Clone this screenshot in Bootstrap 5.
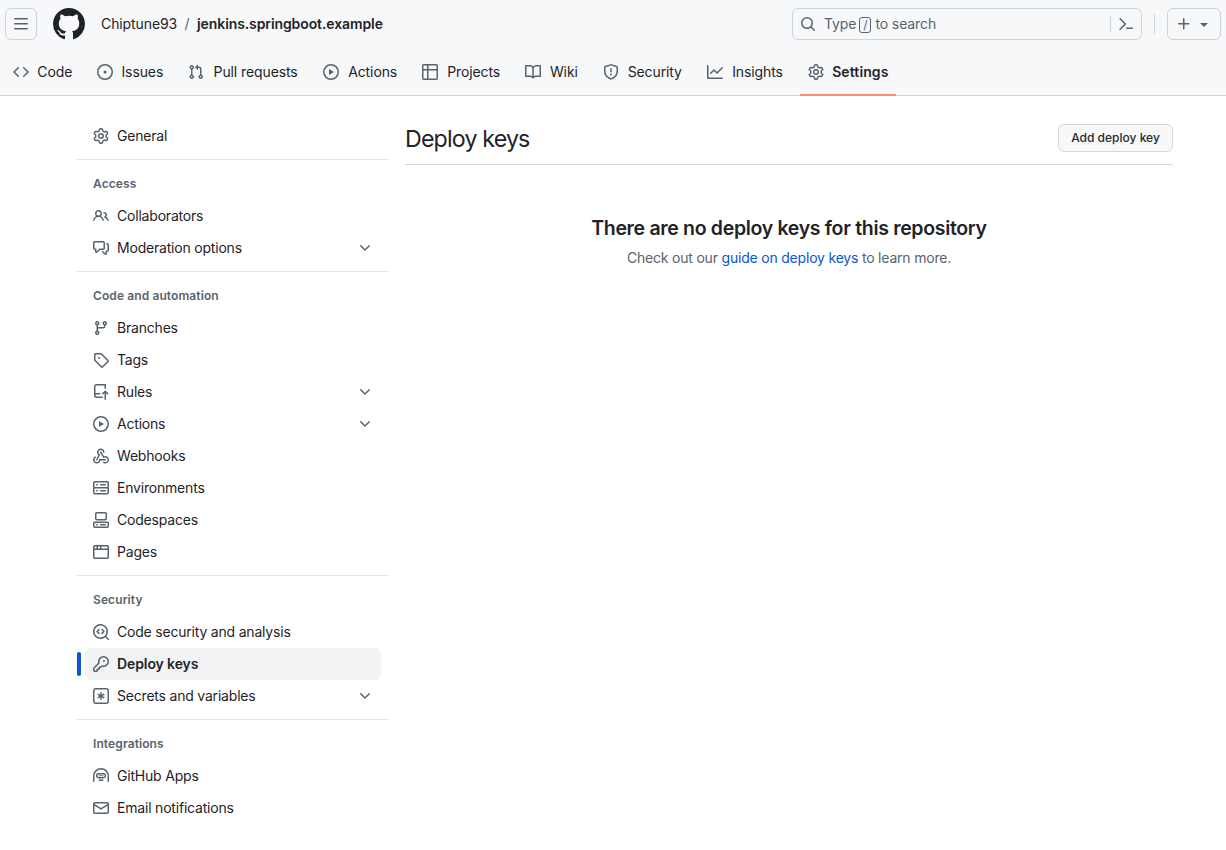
<!DOCTYPE html>
<html lang="en">
<head>
<meta charset="utf-8">
<meta name="viewport" content="width=device-width, initial-scale=1">
<title>Deploy keys</title>
<link rel="stylesheet" href="https://cdn.jsdelivr.net/npm/bootstrap@5.3.0/dist/css/bootstrap.min.css">
<style>
  body { font-family: Inter, "Liberation Sans", sans-serif; font-size: 14px; line-height: 20px; color: #1f2328; letter-spacing: -.1px; }
  a { color: inherit; text-decoration: none; }
  .ico { width: 16px; height: 16px; fill: #59636e; flex: none; display: block; }
  .fw-semi { font-weight: 600; }

  .app-header { background: #f6f8fa; border-bottom: 1px solid #d0d7de; height: 96px; }
  .top-bar { height: 48px; padding: 0 5px; }
  .box-btn { height: 32px; border: 1px solid #ccd3dc; border-radius: 6px; background: transparent; }
  .menu-btn { width: 32px; }
  .add-btn { width: 54px; padding: 0 8px; gap: 4px; }
  .logo { width: 32px; height: 32px; fill: #1f2328; margin: 0 12px 0 16px; }
  .crumb-sep { color: #59636e; margin: 0 7.5px; }
  .search-box { width: 350px; color: #59636e; padding: 0 7px; }
  .slash-key { border: 1px solid #59636e; border-radius: 3px; width: 12px; height: 16px; line-height: 14px; font-size: 12px; margin: 1px 4px 0 3px; }
  .rule-v { width: 1px; height: 16px; background: #ccd3dc; }
  .search-box .rule-v { margin-right: 7px; }
  .bar-rule { height: 20px; margin: 0 12px; }

  .tabs { height: 47px; padding: 0 5px; gap: 8px; }
  .tab { padding: 2px 8px 0; gap: 8px; height: 48px; border-bottom: 2px solid transparent; }
  .tab.current { border-color: #fd8c73; font-weight: 600; letter-spacing: .1px; }
  .tab span { text-align: center; }
  .tab span::before { content: attr(data-label); display: block; height: 0; font-weight: 600; letter-spacing: -.06px; visibility: hidden; overflow: hidden; }
  .tab.current span::before { letter-spacing: .1px; }

  .page { padding: 24px 53px 0 77px; gap: 16px; }
  .side { width: 312px; flex: none; letter-spacing: -.2px; }
  .side-section { border-top: 1px solid #e1e4e8; margin-top: 7px; padding-top: 8px; }
  .side-title { font-size: 12px; font-weight: 600; color: #59636e; height: 32px; padding-left: 16px; letter-spacing: .1px; }
  .side-item { height: 32px; margin: 0 8px; padding: 0 8px; gap: 8px; border-radius: 6px; }
  .side-item.current { background: #f2f3f5; font-weight: 600; letter-spacing: -.1px; }
  .side-item.current::before { content: ""; position: absolute; left: -8px; top: 4px; width: 4px; height: 24px; border-radius: 6px; background: #0b57d0; }

  .page-head { height: 45px; padding-bottom: 8px; border-bottom: 1px solid #d0d7de; }
  .page-head h1 { font-size: 23.25px; font-weight: 400; line-height: 36px; letter-spacing: -.86px; padding-top: 2px; }
  .key-btn { height: 28px; width: 115px; border: 1px solid #d5d8dc; border-radius: 6px; background: #f6f8fa; font-size: 12px; font-weight: 500; color: #25292e; padding: 0; line-height: 20px; }
  .blank { padding-top: 48px; }
  .blank h2 { font-size: 19.5px; font-weight: 600; line-height: 30px; letter-spacing: -.32px; }
  .blank p { color: #59636e; padding-top: 5px; letter-spacing: -.2px; }
  .blank a { color: #0b57d0; }
</style>
</head>
<body>
<svg width="0" height="0" class="d-none" xmlns="http://www.w3.org/2000/svg">
  <symbol id="bars" viewBox="0 0 16 16"><path d="M1 2.75A.75.75 0 0 1 1.75 2h12.5a.75.75 0 0 1 0 1.5H1.75A.75.75 0 0 1 1 2.75Zm0 5A.75.75 0 0 1 1.75 7h12.5a.75.75 0 0 1 0 1.5H1.75A.75.75 0 0 1 1 7.75ZM1.75 12h12.5a.75.75 0 0 1 0 1.5H1.75a.75.75 0 0 1 0-1.5Z"/></symbol>
  <symbol id="github" viewBox="0 0 16 16"><path d="M8 0c4.42 0 8 3.58 8 8a8.013 8.013 0 0 1-5.45 7.59c-.4.08-.55-.17-.55-.38 0-.27.01-1.13.01-2.2 0-.75-.25-1.23-.54-1.48 1.78-.2 3.65-.88 3.65-3.95 0-.88-.31-1.59-.82-2.15.08-.2.36-1.02-.08-2.12 0 0-.67-.22-2.2.82-.64-.18-1.32-.27-2-.27-.68 0-1.36.09-2 .27-1.53-1.03-2.2-.82-2.2-.82-.44 1.1-.16 1.92-.08 2.12-.51.56-.82 1.28-.82 2.15 0 3.06 1.86 3.75 3.64 3.95-.23.2-.44.55-.51 1.07-.46.21-1.61.55-2.33-.66-.15-.24-.6-.83-1.23-.82-.67.01-.27.38.01.53.34.19.73.9.82 1.13.16.45.68 1.31 2.69.94 0 .67.01 1.3.01 1.49 0 .21-.15.45-.55.38A7.995 7.995 0 0 1 0 8c0-4.42 3.58-8 8-8Z"/></symbol>
  <symbol id="code" viewBox="0 0 16 16"><path d="m11.28 3.22 4.25 4.25a.75.75 0 0 1 0 1.06l-4.25 4.25a.749.749 0 0 1-1.275-.326.749.749 0 0 1 .215-.734L13.94 8l-3.72-3.72a.749.749 0 0 1 .326-1.275.749.749 0 0 1 .734.215Zm-6.56 0a.751.751 0 0 1 1.042.018.751.751 0 0 1 .018 1.042L2.06 8l3.72 3.72a.749.749 0 0 1-.326 1.275.749.749 0 0 1-.734-.215L.47 8.53a.75.75 0 0 1 0-1.06Z"/></symbol>
  <symbol id="issue" viewBox="0 0 16 16"><path d="M8 9.5a1.5 1.5 0 1 0 0-3 1.5 1.5 0 0 0 0 3Z"/><path d="M8 0a8 8 0 1 1 0 16A8 8 0 0 1 8 0ZM1.5 8a6.5 6.5 0 1 0 13 0 6.5 6.5 0 0 0-13 0Z"/></symbol>
  <symbol id="pull" viewBox="0 0 16 16"><path d="M1.5 3.25a2.25 2.25 0 1 1 3 2.122v5.256a2.251 2.251 0 1 1-1.5 0V5.372A2.25 2.25 0 0 1 1.5 3.25Zm5.677-.177L9.573.677A.25.25 0 0 1 10 .854V2.5h1A2.5 2.5 0 0 1 13.5 5v5.628a2.251 2.251 0 1 1-1.5 0V5a1 1 0 0 0-1-1h-1v1.646a.25.25 0 0 1-.427.177L7.177 3.427a.25.25 0 0 1 0-.354ZM3.75 2.5a.75.75 0 1 0 0 1.5.75.75 0 0 0 0-1.5Zm0 9.5a.75.75 0 1 0 0 1.5.75.75 0 0 0 0-1.5Zm8.25.75a.75.75 0 1 0 1.5 0 .75.75 0 0 0-1.5 0Z"/></symbol>
  <symbol id="play" viewBox="0 0 16 16"><path d="M8 0a8 8 0 1 1 0 16A8 8 0 0 1 8 0ZM1.5 8a6.5 6.5 0 1 0 13 0 6.5 6.5 0 0 0-13 0Zm4.879-2.773 4.264 2.559a.25.25 0 0 1 0 .428l-4.264 2.559A.25.25 0 0 1 6 10.559V5.442a.25.25 0 0 1 .379-.215Z"/></symbol>
  <symbol id="grid" viewBox="0 0 16 16"><path d="M0 1.75C0 .784.784 0 1.75 0h12.5C15.216 0 16 .784 16 1.75v12.5A1.75 1.75 0 0 1 14.25 16H1.75A1.75 1.75 0 0 1 0 14.25ZM6.5 6.5v8h7.75a.25.25 0 0 0 .25-.25V6.5Zm8-1.5V1.75a.25.25 0 0 0-.25-.25H6.5V5Zm-13 1.5v7.75c0 .138.112.25.25.25H5v-8ZM5 5V1.5H1.75a.25.25 0 0 0-.25.25V5Z"/></symbol>
  <symbol id="book" viewBox="0 0 16 16"><path d="M0 1.75A.75.75 0 0 1 .75 1h4.253c1.227 0 2.317.59 3 1.501A3.743 3.743 0 0 1 11.006 1h4.245a.75.75 0 0 1 .75.75v10.5a.75.75 0 0 1-.75.75h-4.507a2.25 2.25 0 0 0-1.591.659l-.622.621a.75.75 0 0 1-1.06 0l-.622-.621A2.25 2.25 0 0 0 5.258 13H.75a.75.75 0 0 1-.75-.75Zm7.251 10.324.004-5.073-.002-2.253A2.25 2.25 0 0 0 5.003 2.5H1.5v9h3.757a3.75 3.75 0 0 1 1.994.574ZM8.755 4.75l-.004 7.322a3.752 3.752 0 0 1 1.992-.572H14.5v-9h-3.495a2.25 2.25 0 0 0-2.25 2.25Z"/></symbol>
  <symbol id="shield" viewBox="0 0 16 16"><path d="M7.467.133a1.748 1.748 0 0 1 1.066 0l5.25 1.68A1.75 1.75 0 0 1 15 3.48V7c0 1.566-.32 3.182-1.303 4.682-.983 1.498-2.585 2.813-5.032 3.855a1.697 1.697 0 0 1-1.33 0c-2.447-1.042-4.049-2.357-5.032-3.855C1.32 10.182 1 8.566 1 7V3.48a1.755 1.755 0 0 1 1.217-1.667Zm.61 1.429a.25.25 0 0 0-.153 0l-5.25 1.68a.25.25 0 0 0-.174.238V7c0 1.358.275 2.666 1.057 3.86.784 1.194 2.121 2.34 4.366 3.297a.196.196 0 0 0 .154 0c2.245-.956 3.582-2.104 4.366-3.298C13.225 9.666 13.5 8.36 13.5 7V3.48a.251.251 0 0 0-.174-.237l-5.25-1.68ZM8.75 4.75v3a.75.75 0 0 1-1.5 0v-3a.75.75 0 0 1 1.5 0ZM9 10.5a1 1 0 1 1-2 0 1 1 0 0 1 2 0Z"/></symbol>
  <symbol id="graph" viewBox="0 0 16 16"><path d="M1.5 1.75V13.5h13.75a.75.75 0 0 1 0 1.5H.75a.75.75 0 0 1-.75-.75V1.75a.75.75 0 0 1 1.5 0Zm14.28 2.53-5.25 5.25a.75.75 0 0 1-1.06 0L7 7.06 4.28 9.78a.751.751 0 0 1-1.042-.018.751.751 0 0 1-.018-1.042l3.25-3.25a.75.75 0 0 1 1.06 0L10 7.94l4.72-4.72a.751.751 0 0 1 1.042.018.751.751 0 0 1 .018 1.042Z"/></symbol>
  <symbol id="gear" viewBox="0 0 16 16"><path d="M8 0a8.2 8.2 0 0 1 .701.031C9.444.095 9.99.645 10.16 1.29l.288 1.107c.018.066.079.158.212.224.231.114.454.243.668.386.123.082.233.09.299.071l1.103-.303c.644-.176 1.392.021 1.82.63.27.385.506.792.704 1.218.315.675.111 1.422-.364 1.891l-.814.806c-.049.048-.098.147-.088.294.016.257.016.515 0 .772-.01.147.038.246.088.294l.814.806c.475.469.679 1.216.364 1.891a7.977 7.977 0 0 1-.704 1.217c-.428.61-1.176.807-1.82.63l-1.102-.302c-.067-.019-.177-.011-.3.071a5.909 5.909 0 0 1-.668.386c-.133.066-.194.158-.211.224l-.29 1.106c-.168.646-.715 1.196-1.458 1.26a8.006 8.006 0 0 1-1.402 0c-.743-.064-1.289-.614-1.458-1.26l-.289-1.106c-.018-.066-.079-.158-.212-.224a5.738 5.738 0 0 1-.668-.386c-.123-.082-.233-.09-.299-.071l-1.103.303c-.644.176-1.392-.021-1.82-.63a8.12 8.12 0 0 1-.704-1.218c-.315-.675-.111-1.422.363-1.891l.815-.806c.05-.048.098-.147.088-.294a6.214 6.214 0 0 1 0-.772c.01-.147-.038-.246-.088-.294l-.815-.806C.635 6.045.431 5.298.746 4.623a7.92 7.92 0 0 1 .704-1.217c.428-.61 1.176-.807 1.82-.63l1.102.302c.067.019.177.011.3-.071.214-.143.437-.272.668-.386.133-.066.194-.158.211-.224l.29-1.106C6.009.645 6.556.095 7.299.03 7.53.01 7.764 0 8 0Zm-.571 1.525c-.036.003-.108.036-.137.146l-.289 1.105c-.147.561-.549.967-.998 1.189-.173.086-.34.183-.5.29-.417.278-.97.423-1.529.27l-1.103-.303c-.109-.03-.175.016-.195.045-.22.312-.412.644-.573.99-.014.031-.021.11.059.19l.815.806c.411.406.562.957.53 1.456a4.709 4.709 0 0 0 0 .582c.032.499-.119 1.05-.53 1.456l-.815.806c-.081.08-.073.159-.059.19.162.346.353.677.573.989.02.03.085.076.195.046l1.102-.303c.56-.153 1.113-.008 1.53.27.161.107.328.204.501.29.447.222.85.629.997 1.189l.289 1.105c.029.109.101.143.137.146a6.6 6.6 0 0 0 1.142 0c.036-.003.108-.036.137-.146l.289-1.105c.147-.561.549-.967.998-1.189.173-.086.34-.183.5-.29.417-.278.97-.423 1.529-.27l1.103.303c.109.029.175-.016.195-.045.22-.313.411-.644.573-.99.014-.031.021-.11-.059-.19l-.815-.806c-.411-.406-.562-.957-.53-1.456a4.709 4.709 0 0 0 0-.582c-.032-.499.119-1.05.53-1.456l.815-.806c.081-.08.073-.159.059-.19a6.464 6.464 0 0 0-.573-.989c-.02-.03-.085-.076-.195-.046l-1.102.303c-.56.153-1.113.008-1.53-.27a4.44 4.44 0 0 0-.501-.29c-.447-.222-.85-.629-.997-1.189l-.289-1.105c-.029-.11-.101-.143-.137-.146a6.6 6.6 0 0 0-1.142 0ZM11 8a3 3 0 1 1-6 0 3 3 0 0 1 6 0ZM9.5 8a1.5 1.5 0 1 0-3.001.001A1.5 1.5 0 0 0 9.5 8Z"/></symbol>
  <symbol id="search" viewBox="0 0 16 16"><path d="M10.68 11.74a6 6 0 0 1-7.922-8.982 6 6 0 0 1 8.982 7.922l3.04 3.04a.749.749 0 0 1-.326 1.275.749.749 0 0 1-.734-.215ZM11.5 7a4.499 4.499 0 1 0-8.997 0A4.499 4.499 0 0 0 11.5 7Z"/></symbol>
  <symbol id="prompt" viewBox="0 0 16 16"><path d="m6.354 8.04-4.773 4.773a.75.75 0 1 0 1.061 1.06L7.945 8.57a.75.75 0 0 0 0-1.06L2.642 2.206a.75.75 0 0 0-1.06 1.061L6.353 8.04ZM8.75 11.5a.75.75 0 0 0 0 1.5h5.5a.75.75 0 0 0 0-1.5h-5.5Z"/></symbol>
  <symbol id="plus" viewBox="0 0 16 16"><path d="M7.75 2a.75.75 0 0 1 .75.75V7h4.25a.75.75 0 0 1 0 1.5H8.5v4.25a.75.75 0 0 1-1.5 0V8.5H2.75a.75.75 0 0 1 0-1.5H7V2.75A.75.75 0 0 1 7.75 2Z"/></symbol>
  <symbol id="caret" viewBox="0 0 16 16"><path d="m4.427 7.427 3.396 3.396a.25.25 0 0 0 .354 0l3.396-3.396A.25.25 0 0 0 11.396 7H4.604a.25.25 0 0 0-.177.427Z"/></symbol>
  <symbol id="people" viewBox="0 0 16 16"><path d="M2 5.5a3.5 3.5 0 1 1 5.898 2.549 5.508 5.508 0 0 1 3.034 4.084.75.75 0 1 1-1.482.235 4 4 0 0 0-7.9 0 .75.75 0 0 1-1.482-.236A5.507 5.507 0 0 1 3.102 8.05 3.493 3.493 0 0 1 2 5.5ZM11 4a3.001 3.001 0 0 1 2.22 5.018 5.01 5.01 0 0 1 2.56 3.012.749.749 0 0 1-.885.954.752.752 0 0 1-.549-.514 3.507 3.507 0 0 0-2.522-2.372.75.75 0 0 1-.574-.73v-.352a.75.75 0 0 1 .416-.672A1.5 1.5 0 0 0 11 5.5.75.75 0 0 1 11 4Zm-5.5-.5a2 2 0 1 0-.001 3.999A2 2 0 0 0 5.5 3.5Z"/></symbol>
  <symbol id="talk" viewBox="0 0 16 16"><path d="M1.75 1h8.5c.966 0 1.75.784 1.75 1.75v5.5A1.75 1.75 0 0 1 10.25 10H7.061l-2.574 2.573A1.458 1.458 0 0 1 2 11.543V10h-.25A1.75 1.75 0 0 1 0 8.25v-5.5C0 1.784.784 1 1.75 1ZM1.5 2.75v5.5c0 .138.112.25.25.25h1a.75.75 0 0 1 .75.75v2.19l2.72-2.72a.749.749 0 0 1 .53-.22h3.5a.25.25 0 0 0 .25-.25v-5.5a.25.25 0 0 0-.25-.25h-8.5a.25.25 0 0 0-.25.25Zm13 2a.25.25 0 0 0-.25-.25h-.5a.75.75 0 0 1 0-1.5h.5c.966 0 1.75.784 1.75 1.75v5.5A1.75 1.75 0 0 1 14.25 12H14v1.543a1.458 1.458 0 0 1-2.487 1.03L9.22 12.28a.749.749 0 0 1 .326-1.275.749.749 0 0 1 .734.215l2.22 2.22v-2.19a.75.75 0 0 1 .75-.75h1a.25.25 0 0 0 .25-.25Z"/></symbol>
  <symbol id="chevron" viewBox="0 0 16 16"><path d="M12.78 5.22a.749.749 0 0 1 0 1.06l-4.25 4.25a.749.749 0 0 1-1.06 0L3.22 6.28a.749.749 0 1 1 1.06-1.06L8 8.939l3.72-3.719a.749.749 0 0 1 1.06 0Z"/></symbol>
  <symbol id="branch" viewBox="0 0 16 16"><path d="M9.5 3.25a2.25 2.25 0 1 1 3 2.122V6A2.5 2.5 0 0 1 10 8.5H6a1 1 0 0 0-1 1v1.128a2.251 2.251 0 1 1-1.5 0V5.372a2.25 2.25 0 1 1 1.5 0v1.836A2.493 2.493 0 0 1 6 7h4a1 1 0 0 0 1-1v-.628A2.25 2.25 0 0 1 9.5 3.25Zm-6 0a.75.75 0 1 0 1.5 0 .75.75 0 0 0-1.5 0Zm8.25-.75a.75.75 0 1 0 0 1.5.75.75 0 0 0 0-1.5ZM4.25 12a.75.75 0 1 0 0 1.5.75.75 0 0 0 0-1.5Z"/></symbol>
  <symbol id="tag" viewBox="0 0 16 16"><path d="M1 7.775V2.75C1 1.784 1.784 1 2.75 1h5.025c.464 0 .91.184 1.238.513l6.25 6.25a1.75 1.75 0 0 1 0 2.474l-5.026 5.026a1.75 1.75 0 0 1-2.474 0l-6.25-6.25A1.752 1.752 0 0 1 1 7.775Zm1.5 0c0 .066.026.13.073.177l6.25 6.25a.25.25 0 0 0 .354 0l5.025-5.025a.25.25 0 0 0 0-.354l-6.25-6.25a.25.25 0 0 0-.177-.073H2.75a.25.25 0 0 0-.25.25ZM6 5a1 1 0 1 1 0 2 1 1 0 0 1 0-2Z"/></symbol>
  <symbol id="push" viewBox="0 0 16 16"><path d="M1 2.5A2.5 2.5 0 0 1 3.5 0h8.75a.75.75 0 0 1 .75.75v3.5a.75.75 0 0 1-1.5 0V1.5h-8a1 1 0 0 0-1 1v6.708A2.493 2.493 0 0 1 3.5 9h3.25a.75.75 0 0 1 0 1.5H3.5a1 1 0 0 0 0 2h5.75a.75.75 0 0 1 0 1.5H3.5A2.5 2.5 0 0 1 1 11.5Zm13.23 7.79h-.001l-1.224-1.224v6.184a.75.75 0 0 1-1.5 0V9.066L10.28 10.29a.75.75 0 0 1-1.06-1.061l2.505-2.504a.75.75 0 0 1 1.06 0L15.29 9.23a.751.751 0 0 1-.018 1.042.751.751 0 0 1-1.042.018Z"/></symbol>
  <symbol id="hook" viewBox="0 0 16 16"><path d="M5.5 4.25a2.25 2.25 0 0 1 4.5 0 .75.75 0 0 0 1.5 0 3.75 3.75 0 1 0-6.14 2.889l-2.272 4.258a.75.75 0 0 0 1.324.706L7 7.25a.75.75 0 0 0-.309-1.015A2.25 2.25 0 0 1 5.5 4.25Z"/><path d="M7.364 3.607a.75.75 0 0 1 1.03.257l2.608 4.349a3.75 3.75 0 1 1-.628 6.785.75.75 0 0 1 .752-1.299 2.25 2.25 0 1 0-.033-3.88.75.75 0 0 1-1.03-.256L7.107 4.636a.75.75 0 0 1 .257-1.03Z"/><path d="M2.9 8.776A.75.75 0 0 1 2.625 9.8 2.25 2.25 0 1 0 6 11.75a.75.75 0 0 1 .75-.751h5.5a.75.75 0 0 1 0 1.5H7.425a3.751 3.751 0 1 1-5.55-3.998.75.75 0 0 1 1.024.274Z"/></symbol>
  <symbol id="server" viewBox="0 0 16 16"><path d="M1.75 1h12.5c.966 0 1.75.784 1.75 1.75v4c0 .372-.116.717-.314 1 .198.283.314.628.314 1v4a1.75 1.75 0 0 1-1.75 1.75H1.75A1.75 1.75 0 0 1 0 12.75v-4c0-.358.109-.707.314-1a1.739 1.739 0 0 1-.314-1v-4C0 1.784.784 1 1.75 1ZM1.5 2.75v4c0 .138.112.25.25.25h12.5a.25.25 0 0 0 .25-.25v-4a.25.25 0 0 0-.25-.25H1.75a.25.25 0 0 0-.25.25Zm.25 5.75a.25.25 0 0 0-.25.25v4c0 .138.112.25.25.25h12.5a.25.25 0 0 0 .25-.25v-4a.25.25 0 0 0-.25-.25ZM7 4.75A.75.75 0 0 1 7.75 4h4.5a.75.75 0 0 1 0 1.5h-4.5A.75.75 0 0 1 7 4.75ZM7.75 10h4.5a.75.75 0 0 1 0 1.5h-4.5a.75.75 0 0 1 0-1.5ZM3 4.75A.75.75 0 0 1 3.75 4h.5a.75.75 0 0 1 0 1.5h-.5A.75.75 0 0 1 3 4.75ZM3.75 10h.5a.75.75 0 0 1 0 1.5h-.5a.75.75 0 0 1 0-1.5Z"/></symbol>
  <symbol id="codespace" viewBox="0 0 16 16"><path d="M0 11.25c0-.966.784-1.75 1.75-1.75h12.5c.966 0 1.75.784 1.75 1.75v3A1.75 1.75 0 0 1 14.25 16H1.75A1.75 1.75 0 0 1 0 14.25Zm2-9.5C2 .784 2.784 0 3.75 0h8.5C13.216 0 14 .784 14 1.75v5a1.75 1.75 0 0 1-1.75 1.75h-8.5A1.75 1.75 0 0 1 2 6.75Zm1.75-.25a.25.25 0 0 0-.25.25v5c0 .138.112.25.25.25h8.5a.25.25 0 0 0 .25-.25v-5a.25.25 0 0 0-.25-.25Zm-2 9.5a.25.25 0 0 0-.25.25v3c0 .138.112.25.25.25h12.5a.25.25 0 0 0 .25-.25v-3a.25.25 0 0 0-.25-.25Z"/><path d="M7 12.75a.75.75 0 0 1 .75-.75h4.5a.75.75 0 0 1 0 1.5h-4.5a.75.75 0 0 1-.75-.75Zm-4 0a.75.75 0 0 1 .75-.75h.5a.75.75 0 0 1 0 1.5h-.5a.75.75 0 0 1-.75-.75Z"/></symbol>
  <symbol id="browser" viewBox="0 0 16 16"><path d="M0 2.75C0 1.784.784 1 1.75 1h12.5c.966 0 1.75.784 1.75 1.75v10.5A1.75 1.75 0 0 1 14.25 15H1.75A1.75 1.75 0 0 1 0 13.25ZM14.5 6h-13v7.25c0 .138.112.25.25.25h12.5a.25.25 0 0 0 .25-.25Zm-6-3.5v2h6V2.75a.25.25 0 0 0-.25-.25ZM5 2.5v2h2v-2Zm-3.25 0a.25.25 0 0 0-.25.25V4.5h2v-2Z"/></symbol>
  <symbol id="scan" viewBox="0 0 16 16"><path d="M8.47 4.97a.75.75 0 0 0 0 1.06L9.94 7.5 8.47 8.97a.75.75 0 1 0 1.06 1.06l2-2a.75.75 0 0 0 0-1.06l-2-2a.75.75 0 0 0-1.06 0ZM6.53 6.03a.75.75 0 0 0-1.06-1.06l-2 2a.75.75 0 0 0 0 1.06l2 2a.75.75 0 1 0 1.06-1.06L5.06 7.5l1.47-1.47Z"/><path d="M12.246 13.307a7.501 7.501 0 1 1 1.06-1.06l2.474 2.473a.749.749 0 1 1-1.06 1.06l-2.474-2.473ZM1.5 7.5a6 6 0 1 0 12 0 6 6 0 0 0-12 0Z"/></symbol>
  <symbol id="key" viewBox="0 0 16 16"><path d="M10.5 0a5.499 5.499 0 1 1-1.288 10.848l-.932.932a.749.749 0 0 1-.53.22H7v.75a.749.749 0 0 1-.22.53l-.5.5a.749.749 0 0 1-.53.22H5v.75a.749.749 0 0 1-.22.53l-.5.5a.749.749 0 0 1-.53.22h-2A1.75 1.75 0 0 1 0 14.25v-2c0-.199.079-.389.22-.53l4.932-4.932A5.5 5.5 0 0 1 10.5 0Zm-4 5.5c-.001.431.069.86.205 1.269a.75.75 0 0 1-.181.768L1.5 12.56v1.69c0 .138.112.25.25.25h1.69l.06-.06v-1.19a.75.75 0 0 1 .75-.75h1.19l.06-.06v-1.19a.75.75 0 0 1 .75-.75h1.19l1.023-1.025a.75.75 0 0 1 .768-.18A4 4 0 1 0 6.5 5.5ZM11 6a1 1 0 1 1 0-2 1 1 0 0 1 0 2Z"/></symbol>
  <symbol id="secret" viewBox="0 0 16 16"><path d="M0 2.75A2.75 2.75 0 0 1 2.75 0h10.5A2.75 2.75 0 0 1 16 2.75v10.5A2.75 2.75 0 0 1 13.25 16H2.75A2.75 2.75 0 0 1 0 13.25ZM2.75 1.5c-.69 0-1.25.56-1.25 1.25v10.5c0 .69.56 1.25 1.25 1.25h10.5c.69 0 1.25-.56 1.25-1.25V2.75c0-.69-.56-1.25-1.25-1.25Z"/><path d="M8 4a.75.75 0 0 1 .75.75V6.7l1.69-.975a.75.75 0 0 1 .75 1.3L9.5 8l1.69.976a.75.75 0 0 1-.75 1.298L8.75 9.3v1.951a.75.75 0 0 1-1.5 0V9.299l-1.69.976a.75.75 0 0 1-.75-1.3L6.5 8l-1.69-.975a.75.75 0 0 1 .75-1.3l1.69.976V4.75A.75.75 0 0 1 8 4Z"/></symbol>
  <symbol id="robot" viewBox="0 0 16 16"><path d="M0 8a8 8 0 1 1 16 0v5.25a.75.75 0 0 1-1.5 0V8a6.5 6.5 0 1 0-13 0v5.25a.75.75 0 0 1-1.5 0Zm5.5 4.25a.75.75 0 0 1 .75-.75h3.5a.75.75 0 0 1 0 1.5h-3.5a.75.75 0 0 1-.75-.75Z"/><path fill="none" stroke="#59636e" stroke-width="1.4" d="M3.7 7A1.3 1.3 0 0 1 5 5.700h6A1.3 1.3 0 0 1 12.300 7v.6a2.200 2.200 0 0 1-2.200 2.200H5.900A2.200 2.200 0 0 1 3.700 7.600Z"/><path fill="none" stroke="#59636e" stroke-width=".9" stroke-linecap="round" stroke-linejoin="round" d="m5.600 7.200 1.200 1 1.200-1 1.200 1 1.200-1"/></symbol>
  <symbol id="mail" viewBox="0 0 16 16"><path d="M1.75 2h12.5c.966 0 1.75.784 1.75 1.75v8.5A1.75 1.75 0 0 1 14.25 14H1.75A1.75 1.75 0 0 1 0 12.25v-8.5C0 2.784.784 2 1.75 2ZM1.5 12.251c0 .138.112.25.25.25h12.5a.25.25 0 0 0 .25-.25V5.809L8.38 9.397a.75.75 0 0 1-.76 0L1.5 5.809v6.442Zm13-8.181v-.32a.25.25 0 0 0-.25-.25H1.75a.25.25 0 0 0-.25.25v.32L8 7.88Z"/></symbol>
</svg>

<header class="app-header">
  <div class="top-bar d-flex align-items-center">
    <button class="box-btn menu-btn d-flex align-items-center justify-content-center p-0" aria-label="Menu"><svg class="ico"><use href="#bars"/></svg></button>
    <svg class="logo"><use href="#github"/></svg>
    <nav class="d-flex flex-grow-1 ms-1">
      <a href="#">Chiptune93</a><span class="crumb-sep">/</span><a href="#" class="fw-semi">jenkins.springboot.example</a>
    </nav>
    <div class="box-btn search-box d-flex align-items-center">
      <svg class="ico me-2"><use href="#search"/></svg>
      <span>Type</span><span class="slash-key text-center">/</span><span>to search</span>
      <span class="rule-v ms-auto"></span>
      <svg class="ico"><use href="#prompt"/></svg>
    </div>
    <span class="rule-v bar-rule"></span>
    <button class="box-btn add-btn d-flex align-items-center" aria-label="Create new"><svg class="ico"><use href="#plus"/></svg><svg class="ico"><use href="#caret"/></svg></button>
  </div>
  <nav class="tabs d-flex">
    <a href="#" class="tab d-flex align-items-center"><svg class="ico"><use href="#code"/></svg><span data-label="Code">Code</span></a>
    <a href="#" class="tab d-flex align-items-center"><svg class="ico"><use href="#issue"/></svg><span data-label="Issues">Issues</span></a>
    <a href="#" class="tab d-flex align-items-center"><svg class="ico"><use href="#pull"/></svg><span data-label="Pull requests">Pull requests</span></a>
    <a href="#" class="tab d-flex align-items-center"><svg class="ico"><use href="#play"/></svg><span data-label="Actions">Actions</span></a>
    <a href="#" class="tab d-flex align-items-center"><svg class="ico"><use href="#grid"/></svg><span data-label="Projects">Projects</span></a>
    <a href="#" class="tab d-flex align-items-center"><svg class="ico"><use href="#book"/></svg><span data-label="Wiki">Wiki</span></a>
    <a href="#" class="tab d-flex align-items-center"><svg class="ico"><use href="#shield"/></svg><span data-label="Security">Security</span></a>
    <a href="#" class="tab d-flex align-items-center"><svg class="ico"><use href="#graph"/></svg><span data-label="Insights">Insights</span></a>
    <a href="#" class="tab current d-flex align-items-center"><svg class="ico"><use href="#gear"/></svg><span data-label="Settings">Settings</span></a>
  </nav>
</header>

<div class="page d-flex">
  <nav class="side">
    <a href="#" class="side-item d-flex align-items-center"><svg class="ico"><use href="#gear"/></svg>General</a>
    <section class="side-section">
      <div class="side-title d-flex align-items-center">Access</div>
      <a href="#" class="side-item d-flex align-items-center"><svg class="ico"><use href="#people"/></svg>Collaborators</a>
      <a href="#" class="side-item d-flex align-items-center"><svg class="ico"><use href="#talk"/></svg>Moderation options<svg class="ico ms-auto"><use href="#chevron"/></svg></a>
    </section>
    <section class="side-section">
      <div class="side-title d-flex align-items-center">Code and automation</div>
      <a href="#" class="side-item d-flex align-items-center"><svg class="ico"><use href="#branch"/></svg>Branches</a>
      <a href="#" class="side-item d-flex align-items-center"><svg class="ico"><use href="#tag"/></svg>Tags</a>
      <a href="#" class="side-item d-flex align-items-center"><svg class="ico"><use href="#push"/></svg>Rules<svg class="ico ms-auto"><use href="#chevron"/></svg></a>
      <a href="#" class="side-item d-flex align-items-center"><svg class="ico"><use href="#play"/></svg>Actions<svg class="ico ms-auto"><use href="#chevron"/></svg></a>
      <a href="#" class="side-item d-flex align-items-center"><svg class="ico"><use href="#hook"/></svg>Webhooks</a>
      <a href="#" class="side-item d-flex align-items-center"><svg class="ico"><use href="#server"/></svg>Environments</a>
      <a href="#" class="side-item d-flex align-items-center"><svg class="ico"><use href="#codespace"/></svg>Codespaces</a>
      <a href="#" class="side-item d-flex align-items-center"><svg class="ico"><use href="#browser"/></svg>Pages</a>
    </section>
    <section class="side-section">
      <div class="side-title d-flex align-items-center">Security</div>
      <a href="#" class="side-item d-flex align-items-center"><svg class="ico"><use href="#scan"/></svg>Code security and analysis</a>
      <a href="#" class="side-item current position-relative d-flex align-items-center"><svg class="ico"><use href="#key"/></svg>Deploy keys</a>
      <a href="#" class="side-item d-flex align-items-center"><svg class="ico"><use href="#secret"/></svg>Secrets and variables<svg class="ico ms-auto"><use href="#chevron"/></svg></a>
    </section>
    <section class="side-section">
      <div class="side-title d-flex align-items-center">Integrations</div>
      <a href="#" class="side-item d-flex align-items-center"><svg class="ico"><use href="#robot"/></svg>GitHub Apps</a>
      <a href="#" class="side-item d-flex align-items-center"><svg class="ico"><use href="#mail"/></svg>Email notifications</a>
    </section>
  </nav>
  <main class="flex-grow-1">
    <div class="page-head d-flex align-items-center justify-content-between">
      <h1 class="m-0">Deploy keys</h1>
      <button class="btn key-btn">Add deploy key</button>
    </div>
    <div class="blank text-center">
      <h2 class="m-0">There are no deploy keys for this repository</h2>
      <p class="m-0">Check out our <a href="#">guide on deploy keys</a> to learn more.</p>
    </div>
  </main>
</div>
<script src="https://cdn.jsdelivr.net/npm/bootstrap@5.3.0/dist/js/bootstrap.bundle.min.js"></script>
</body>
</html>
